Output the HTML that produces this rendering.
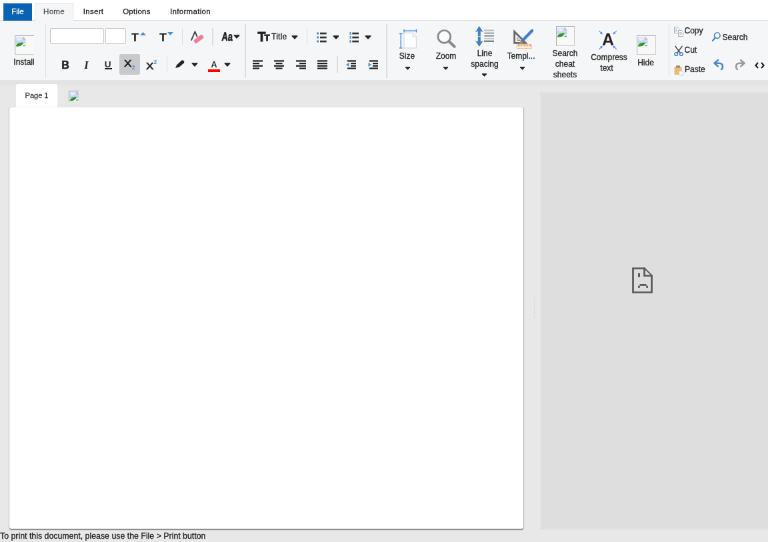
<!DOCTYPE html>
<html><head><meta charset="utf-8"><title>Editor</title>
<style>
html,body{margin:0;padding:0;width:768px;height:542px;overflow:hidden;background:#e8e8e8;}
#stage{position:absolute;left:0;top:0;width:1152px;height:813px;transform:scale(0.666667);transform-origin:0 0;will-change:transform;font-family:"Liberation Sans",sans-serif;font-size:12px;color:#222;overflow:hidden;-webkit-text-stroke:0.28px currentColor;}
#stage *{box-sizing:border-box;}
.abs{position:absolute;}
#tabs{position:absolute;left:0;top:0;width:1152px;height:31px;background:#fff;border-bottom:1px solid #dcdcdc;}
#file{position:absolute;left:5px;top:5px;width:43px;height:26px;background:#0a62b5;color:#fff;font-size:11.5px;line-height:25px;text-align:center;}
.tab{position:absolute;top:5px;height:26px;line-height:25px;font-size:11.5px;text-align:center;color:#222;letter-spacing:0.3px;}
#home{left:52px;width:58px;background:#f5f6f7;border:1px solid #e4e4e4;border-bottom:none;color:#555;height:27px;line-height:23px;}
#ribbon{position:absolute;left:0;top:31px;width:1152px;height:90px;background:#f5f6f7;border-bottom:1.5px solid #e2e2e2;}
.vsep{position:absolute;width:1.5px;background:#dedede;}
.inp{position:absolute;top:42px;height:24px;background:#fff;border:1.5px solid #c6c6c6;border-radius:2px;}
.lbl{position:absolute;text-align:center;font-size:12px;line-height:16px;color:#222;white-space:nowrap;transform:translateX(-50%);}
.arr{position:absolute;width:0;height:0;border-left:4.5px solid transparent;border-right:4.5px solid transparent;border-top:5px solid #222;}
.bimg{position:absolute;border:1.3px solid;border-color:#aeaeae #cbcbcb #cbcbcb #aeaeae;background:#f8f8f8;}
.t{position:absolute;font-weight:bold;color:#222;white-space:nowrap;-webkit-text-stroke:0;}
svg{position:absolute;overflow:visible;}
#doc{position:absolute;left:13.5px;top:161px;width:771.5px;height:632px;background:#fff;border-radius:3px;box-shadow:0 1.8px 1.2px #858585, 1px 0 1px #b0b0b0, -1px 0 1px #c4c4c4;}
#ptab{position:absolute;left:24px;top:126px;width:62px;height:36px;background:#fff;border-radius:3px 3px 0 0;font-size:11px;line-height:34px;text-align:center;color:#333;}
#panel{position:absolute;left:810px;top:138px;width:342px;height:657px;background:#dedede;border:2px solid #e2e2e2;border-right:none;}
#status{position:absolute;left:0px;top:795px;font-size:12.35px;line-height:18px;color:#222;white-space:nowrap;}
</style></head><body>
<div id="stage">
<div id="tabs">
  <div id="file">File</div>
  <div class="tab" id="home">Home</div>
  <div class="tab" style="left:110px;width:60px;">Insert</div>
  <div class="tab" style="left:170px;width:70px;">Options</div>
  <div class="tab" style="left:240px;width:91px;">Information</div>
</div>
<div id="ribbon"></div>
<div class="abs" style="left:0;top:122px;width:1152px;height:9px;background:linear-gradient(#e2e2e2,#e8e8e8);"></div>

<!-- Install -->
<div class="bimg" style="left:22px;top:53px;width:29px;height:29px;border-right:none"></div>
<svg class="bi" style="left:23px;top:54.7px" width="16" height="16" viewBox="0 0 16 16"><use href="#broken"/></svg>
<div class="lbl" style="left:36px;top:85px;">Install</div>

<div class="vsep" style="left:67.5px;top:36px;height:81px;"></div>
<div class="inp" style="left:75px;width:81px;"></div>
<div class="inp" style="left:158px;width:31px;"></div>

<!-- T up / T down -->
<div class="t" style="left:197px;top:46.5px;font-size:16px;line-height:20px;transform:scaleX(1.12);transform-origin:0 0;">T</div>
<svg style="left:209.5px;top:48px" width="9" height="5" viewBox="0 0 9 5"><path d="M0 5 L4.5 0 L9 5Z" fill="#4a8fd6"/></svg>
<div class="t" style="left:238.5px;top:46.5px;font-size:16px;line-height:20px;transform:scaleX(1.12);transform-origin:0 0;">T</div>
<svg style="left:251px;top:48px" width="9" height="5" viewBox="0 0 9 5"><path d="M0 0 L9 0 L4.5 5Z" fill="#4a8fd6"/></svg>
<div class="vsep" style="left:272.5px;top:43px;height:24px;"></div>

<!-- eraser -->
<svg style="left:286px;top:46px" width="20" height="20" viewBox="0 0 20 20">
  <path d="M1.1 13.9 L6.4 1.4 L9.5 8.5" fill="none" stroke="#444" stroke-width="1.9" stroke-linejoin="round" stroke-linecap="round"/>
  <rect x="4.2" y="9.3" width="15.6" height="6.4" rx="1.6" transform="rotate(-37 12 12.5)" fill="#ec7f97"/>
</svg>
<div class="vsep" style="left:318px;top:42px;height:25.5px;"></div>

<!-- Aa -->
<div class="t" style="left:332px;top:43.5px;font-size:18px;line-height:22px;font-weight:bold;transform:scaleX(0.7) skewX(-6deg);transform-origin:0 100%;-webkit-text-stroke:0.7px #222;">Aa</div>
<svg style="left:350.0px;top:51.7px" width="10" height="6" viewBox="0 0 10 6"><path d="M1 0.8 H9 L5 5.2Z" fill="#222" stroke="#222" stroke-width="1.2" stroke-linejoin="round"/></svg>

<div class="vsep" style="left:367px;top:36px;height:81px;"></div>

<!-- Tt Title -->
<div class="t" style="left:386.5px;top:44px;font-size:19.5px;line-height:22px;-webkit-text-stroke:0.9px #222;">T</div>
<div class="t" style="left:396.5px;top:48px;font-size:13.5px;line-height:18px;-webkit-text-stroke:0.8px #222;">T</div>
<div class="abs" style="left:407px;top:47px;font-size:12px;line-height:16px;color:#222;letter-spacing:0.25px;">Title</div>
<svg style="left:436.5px;top:52.7px" width="10" height="6" viewBox="0 0 10 6"><path d="M1 0.8 H9 L5 5.2Z" fill="#222" stroke="#222" stroke-width="1.2" stroke-linejoin="round"/></svg>
<div class="vsep" style="left:459.5px;top:42px;height:25.5px;"></div>

<!-- bullet list -->
<svg style="left:474.5px;top:47.5px" width="15" height="16" viewBox="0 0 15 16">
  <g fill="#4a8fd6"><rect x="0" y="0.5" width="3" height="3"/><rect x="0" y="6.5" width="3" height="3"/><rect x="0" y="12.5" width="3" height="3"/></g>
  <g fill="#333"><rect x="5" y="0.7" width="9.7" height="2.7"/><rect x="5" y="6.7" width="9.7" height="2.7"/><rect x="5" y="12.7" width="9.7" height="2.7"/></g>
</svg>
<svg style="left:498.5px;top:53.2px" width="10" height="6" viewBox="0 0 10 6"><path d="M1 0.8 H9 L5 5.2Z" fill="#222" stroke="#222" stroke-width="1.2" stroke-linejoin="round"/></svg>
<!-- numbered list -->
<svg style="left:523.5px;top:47.5px" width="15" height="16" viewBox="0 0 15 16">
  <g fill="#4a8fd6"><rect x="0.5" y="0" width="2" height="4"/><rect x="0.5" y="6" width="2" height="4"/><rect x="0.5" y="12" width="2" height="4"/></g>
  <g fill="#333"><rect x="4.3" y="0.7" width="9.7" height="2.7"/><rect x="4.3" y="6.7" width="9.7" height="2.7"/><rect x="4.3" y="12.7" width="9.7" height="2.7"/></g>
</svg>
<svg style="left:547.0px;top:53.2px" width="10" height="6" viewBox="0 0 10 6"><path d="M1 0.8 H9 L5 5.2Z" fill="#222" stroke="#222" stroke-width="1.2" stroke-linejoin="round"/></svg>

<!-- Row 2 -->
<div class="t" style="left:82px;width:32px;top:87.2px;text-align:center;font-size:16px;line-height:22px;-webkit-text-stroke:0.5px #222;">B</div>
<div class="t" style="left:113.5px;width:32px;top:87px;text-align:center;font-size:16.5px;line-height:22px;font-family:'Liberation Serif',serif;font-style:italic;">I</div>
<div class="t" style="left:145.5px;width:32px;top:87px;text-align:center;font-size:13.5px;line-height:20px;">U</div>
<div class="abs" style="left:156.5px;top:101.8px;width:11px;height:2.2px;background:#222;"></div>
<div class="abs" style="left:178.5px;top:80.5px;width:31px;height:31.5px;background:#c9c9c9;border-radius:3px;"></div>
<div class="t" style="left:186px;top:85px;font-size:14.5px;line-height:20px;transform:scaleX(1.18);transform-origin:0 0;font-weight:normal;-webkit-text-stroke:0.65px #222;">X</div>
<div class="t" style="left:197.8px;top:95.5px;font-size:8.5px;line-height:10px;color:#4a8fd6;">2</div>
<div class="t" style="left:218.6px;top:88.7px;font-size:14.5px;line-height:20px;transform:scaleX(1.18);transform-origin:0 0;font-weight:normal;-webkit-text-stroke:0.65px #222;">X</div>
<div class="t" style="left:230.5px;top:88.3px;font-size:8.5px;line-height:10px;color:#4a8fd6;">2</div>
<div class="vsep" style="left:249.5px;top:84px;height:24px;"></div>

<!-- pen -->
<svg style="left:263px;top:90px" width="14" height="12" viewBox="0 0 14 12">
  <path d="M0 12 L2.2 7.2 L9.5 0.6 Q11 -0.3 12.6 1.2 Q14 2.8 13 4.2 L5.8 10.6 Z" fill="#222"/>
</svg>
<svg style="left:286.5px;top:94.2px" width="10" height="6" viewBox="0 0 10 6"><path d="M1 0.8 H9 L5 5.2Z" fill="#222" stroke="#222" stroke-width="1.2" stroke-linejoin="round"/></svg>
<!-- font color -->
<div class="t" style="left:316.5px;top:88.5px;font-size:12.5px;line-height:16px;">A</div>
<div class="abs" style="left:312px;top:103.5px;width:18px;height:4.5px;background:#f00;"></div>
<svg style="left:336.0px;top:94.2px" width="10" height="6" viewBox="0 0 10 6"><path d="M1 0.8 H9 L5 5.2Z" fill="#222" stroke="#222" stroke-width="1.2" stroke-linejoin="round"/></svg>

<!-- align icons -->
<svg style="left:378.5px;top:90px" width="15" height="14" viewBox="0 0 15 14"><g fill="#222"><rect x="0" y="0.3" width="15" height="2.2"/><rect x="0" y="4" width="10" height="2.2"/><rect x="0" y="7.7" width="15" height="2.2"/><rect x="0" y="11.4" width="10" height="2.2"/></g></svg>
<svg style="left:410.5px;top:90px" width="15" height="14" viewBox="0 0 15 14"><g fill="#222"><rect x="0" y="0.3" width="15" height="2.2"/><rect x="2.5" y="4" width="10" height="2.2"/><rect x="0" y="7.7" width="15" height="2.2"/><rect x="2.5" y="11.4" width="10" height="2.2"/></g></svg>
<svg style="left:443.5px;top:90px" width="15" height="14" viewBox="0 0 15 14"><g fill="#222"><rect x="0" y="0.3" width="15" height="2.2"/><rect x="5" y="4" width="10" height="2.2"/><rect x="0" y="7.7" width="15" height="2.2"/><rect x="5" y="11.4" width="10" height="2.2"/></g></svg>
<svg style="left:475.5px;top:90px" width="15" height="14" viewBox="0 0 15 14"><g fill="#222"><rect x="0" y="0.3" width="15" height="2.2"/><rect x="0" y="4" width="15" height="2.2"/><rect x="0" y="7.7" width="15" height="2.2"/><rect x="0" y="11.4" width="15" height="2.2"/></g></svg>
<div class="vsep" style="left:505px;top:84px;height:24.5px;"></div>
<!-- outdent -->
<svg style="left:518.5px;top:90px" width="15" height="14" viewBox="0 0 15 14"><g fill="#222"><rect x="2" y="0.3" width="13" height="2.2"/><rect x="7" y="4" width="8" height="2.2"/><rect x="7" y="7.7" width="8" height="2.2"/><rect x="2" y="11.4" width="13" height="2.2"/></g><path d="M4.5 3.8 L4.5 10 L0 6.9Z" fill="#4a8fd6"/></svg>
<!-- indent -->
<svg style="left:552px;top:90px" width="15" height="14" viewBox="0 0 15 14"><g fill="#222"><rect x="2" y="0.3" width="13" height="2.2"/><rect x="7" y="4" width="8" height="2.2"/><rect x="7" y="7.7" width="8" height="2.2"/><rect x="2" y="11.4" width="13" height="2.2"/></g><path d="M0.5 3.8 L0.5 10 L5 6.9Z" fill="#4a8fd6"/></svg>

<div class="vsep" style="left:579px;top:36px;height:81px;"></div>

<!-- Size -->
<svg style="left:599px;top:44px" width="27" height="29" viewBox="0 0 27 29">
  <path d="M7 5.5 L20 5.5 L25.5 11 L25.5 28 L7 28Z" fill="#fff" stroke="#dedede" stroke-width="1.4"/>
  <path d="M20 5.5 L20 11 L25.5 11" fill="#f4f4f4" stroke="#dedede" stroke-width="1.1"/>
  <g stroke="#4a90ee" stroke-width="1.4" fill="none"><path d="M7 2.3 H25.5 M7 0 V4.6 M25.5 0 V4.6"/><path d="M2.2 6.5 V28 M0 6.5 H4.5 M0 28 H4.5"/></g>
</svg>
<div class="lbl" style="left:610.5px;top:76px;">Size</div>
<svg style="left:606.7px;top:99.5px" width="9" height="5" viewBox="0 0 9 5"><path d="M1 0.8 H8 L4.5 4.2Z" fill="#222" stroke="#222" stroke-width="1" stroke-linejoin="round"/></svg>

<!-- Zoom -->
<svg style="left:655px;top:44px" width="30" height="29" viewBox="0 0 30 29">
  <circle cx="11.3" cy="10.9" r="9.4" fill="#fbfbfb" stroke="#8a8a8a" stroke-width="2.7"/>
  <path d="M18.4 18 L26.6 25.8" stroke="#8a8a8a" stroke-width="4.2" stroke-linecap="round"/>
</svg>
<div class="lbl" style="left:669px;top:76px;">Zoom</div>
<svg style="left:664.1px;top:99.5px" width="9" height="5" viewBox="0 0 9 5"><path d="M1 0.8 H8 L4.5 4.2Z" fill="#222" stroke="#222" stroke-width="1" stroke-linejoin="round"/></svg>

<!-- Line spacing -->
<svg style="left:713px;top:39.5px" width="28" height="29" viewBox="0 0 28 29">
  <path d="M5.8 -1 L11.8 8.3 Q9 6.8 7.8 6.8 V22.2 Q9 22.2 11.8 20.7 L5.8 30 L-0.2 20.7 Q2.6 22.2 3.8 22.2 V6.8 Q2.6 6.8 -0.2 8.3Z" fill="#3f80c2"/>
  <rect x="3" y="13.9" width="6" height="1.1" fill="#f5f6f7" opacity="0.7"/>
  <rect x="13.3" y="4.6" width="14.7" height="1.8" fill="#b5b5b5"/>
  <rect x="13.3" y="8.7" width="14.7" height="1.8" fill="#8f8f8f"/>
  <rect x="13.3" y="12.9" width="14.7" height="1.8" fill="#888"/>
  <rect x="13.3" y="17" width="14.7" height="1.8" fill="#c2c2c2"/>
  <rect x="13" y="20.7" width="15" height="2.1" fill="#6c6c6c"/>
</svg>
<div class="lbl" style="left:727px;top:71.5px;">Line<br>spacing</div>
<svg style="left:721.5px;top:109.6px" width="9" height="5" viewBox="0 0 9 5"><path d="M1 0.8 H8 L4.5 4.2Z" fill="#222" stroke="#222" stroke-width="1" stroke-linejoin="round"/></svg>

<!-- Templ -->
<svg style="left:770px;top:44px" width="30" height="29" viewBox="0 0 30 29">
  <path d="M1.6 3.5 L1.6 20.3 L18.4 20.3 Z" fill="none" stroke="#6a6a6a" stroke-width="2.8" stroke-linejoin="miter"/>
  <path d="M6 12.5 L6 16.5 L10 16.5Z" fill="#f5f6f7" stroke="#6a6a6a" stroke-width="0.8"/>
  <path d="M13.2 17.2 L28 2" stroke="#3f80c2" stroke-width="4.4" stroke-linecap="round"/>
  <path d="M9.5 21.5 L10.6 16.6 L14.4 20.2Z" fill="#d48a4a"/>
  <rect x="5.3" y="22.8" width="22" height="5.8" fill="#fdf1e6" stroke="#f3b585" stroke-width="0.9"/>
  <path d="M7.5 22.8 v2.8 M9.8 22.8 v2.8 M12.1 22.8 v2.8 M14.4 22.8 v2.8 M16.7 22.8 v2.8 M19 22.8 v2.8 M21.3 22.8 v2.8 M23.6 22.8 v2.8 M25.6 22.8 v2.8" stroke="#ec8f4c" stroke-width="1.1"/>
</svg>
<div class="lbl" style="left:781.5px;top:76px;">Templ...</div>
<svg style="left:779.4px;top:99.5px" width="9" height="5" viewBox="0 0 9 5"><path d="M1 0.8 H8 L4.5 4.2Z" fill="#222" stroke="#222" stroke-width="1" stroke-linejoin="round"/></svg>

<!-- Search cheat sheets -->
<div class="bimg" style="left:833.5px;top:39px;width:28.5px;height:30px;"></div>
<svg style="left:834.5px;top:40.7px" width="16" height="16" viewBox="0 0 16 16"><use href="#broken"/></svg>
<div class="lbl" style="left:847.5px;top:71.8px;">Search<br>cheat<br>sheets</div>

<!-- Compress text -->
<svg style="left:898px;top:46px" width="28" height="28" viewBox="0 0 28 28">
  <g stroke="#4a90ee" stroke-width="1.1" fill="none" stroke-linecap="round">
    <path d="M0.6 0.3 L4 3.6"/><path d="M26.7 0.3 L23.3 3.6"/><path d="M0.6 27.9 L4 24.6"/><path d="M26.7 27.9 L23.3 24.6"/>
  </g>
  <g fill="#4a90ee">
    <path d="M5.8 5.4 L1.9 4.4 L4.8 1.5Z"/><path d="M21.5 5.4 L25.4 4.4 L22.5 1.5Z"/>
    <path d="M5.8 22.8 L1.9 23.8 L4.8 26.7Z"/><path d="M21.5 22.8 L25.4 23.8 L22.5 26.7Z"/>
  </g>
</svg>
<div class="t" style="left:902px;top:43.6px;font-size:25px;line-height:30px;width:20px;text-align:center;">A</div>
<div class="lbl" style="left:913.5px;top:77.5px;">Compress</div><div class="lbl" style="left:910px;top:93.5px;">text</div>

<!-- Hide -->
<div class="bimg" style="left:955px;top:53px;width:28.5px;height:28.5px;"></div>
<svg style="left:956px;top:54.7px" width="16" height="16" viewBox="0 0 16 16"><use href="#broken"/></svg>
<div class="lbl" style="left:968.5px;top:85.5px;">Hide</div>

<div class="vsep" style="left:1002.5px;top:36px;height:80px;"></div>

<!-- Copy/Cut/Paste -->
<svg style="left:1011px;top:39.5px" width="14" height="15" viewBox="0 0 14 15">
  <path d="M0.5 0.5 H5.5 L7.5 2.5 V9.5 H0.5Z" fill="#fff" stroke="#aaa" stroke-width="1"/>
  <path d="M6.5 5.5 H11.5 L13.5 7.5 V14.5 H6.5Z" fill="#fff" stroke="#aaa" stroke-width="1"/>
  <path d="M2 3 H5 M2 5 H5 M2 7 H5" stroke="#7aa7d8" stroke-width="0.9"/>
  <path d="M8 9 H12 M8 11 H12" stroke="#7aa7d8" stroke-width="0.9"/>
</svg>
<div class="abs" style="left:1026.5px;top:37.5px;font-size:12px;line-height:16px;">Copy</div>
<svg style="left:1011px;top:68.5px" width="14" height="15" viewBox="0 0 14 15">
  <path d="M2 0.5 L9.5 10.5 M12 0.5 L4.5 10.5" stroke="#555" stroke-width="1.7" stroke-linecap="round" fill="none"/>
  <circle cx="3.2" cy="12" r="2.4" fill="none" stroke="#3f7fd0" stroke-width="1.4"/>
  <circle cx="10.8" cy="12" r="2.4" fill="none" stroke="#3f7fd0" stroke-width="1.4"/>
</svg>
<div class="abs" style="left:1026.5px;top:67px;font-size:12px;line-height:16px;">Cut</div>
<svg style="left:1011px;top:97.5px" width="14" height="15" viewBox="0 0 14 15">
  <rect x="0.5" y="2" width="11" height="12" rx="1" fill="#e9bd72"/>
  <rect x="3" y="0.3" width="6" height="3.2" rx="0.8" fill="#8a8a8a"/>
  <path d="M7.5 8.5 H11.5 L13.5 10.5 V14.6 H7.5Z" fill="#fff" stroke="#b5b5b5" stroke-width="0.8"/>
</svg>
<div class="abs" style="left:1027px;top:96px;font-size:12px;line-height:16px;">Paste</div>

<!-- Search -->
<svg style="left:1068px;top:48px" width="13" height="14" viewBox="0 0 13 14">
  <circle cx="7.8" cy="5.2" r="4.2" fill="#fff" stroke="#3f86c9" stroke-width="1.7"/>
  <path d="M4.6 8.6 L0.9 13" stroke="#3f86c9" stroke-width="2.2" stroke-linecap="round"/>
</svg>
<div class="abs" style="left:1083.5px;top:47.5px;font-size:12px;line-height:16px;">Search</div>

<!-- undo / redo / code -->
<svg style="left:1069.5px;top:89px" width="16" height="16" viewBox="0 0 16 16">
  <path d="M6.8 1.2 L1.6 5.8 L6.8 10.4" fill="none" stroke="#4b86c6" stroke-width="2.6" stroke-linejoin="round" stroke-linecap="round"/>
  <path d="M2.5 5.8 H8.5 Q14 5.8 14 11 Q14 13.6 12 15" fill="none" stroke="#4b86c6" stroke-width="2.6" stroke-linecap="round"/>
</svg>
<svg style="left:1102px;top:88.5px" width="16" height="16" viewBox="0 0 16 16">
  <path d="M9.2 1.2 L14.4 5.8 L9.2 10.4" fill="none" stroke="#999" stroke-width="2.6" stroke-linejoin="round" stroke-linecap="round"/>
  <path d="M13.5 5.8 H7.5 Q2 5.8 2 11 Q2 13.6 4 15" fill="none" stroke="#999" stroke-width="2.6" stroke-linecap="round"/>
</svg>
<svg style="left:1131.5px;top:92.5px" width="15" height="10" viewBox="0 0 15 10">
  <path d="M5 0.8 L1.4 5 L5 9.2 M10 0.8 L13.6 5 L10 9.2" fill="none" stroke="#111" stroke-width="2"/>
</svg>

<!-- doc tabs -->
<div id="ptab">Page 1</div>
<div class="abs" style="left:102.5px;top:135.5px;width:16px;height:17px;border-left:1.5px solid #9c9c9c;border-top:1.5px solid #9c9c9c;"></div><svg style="left:104px;top:137px" width="14.5" height="15.5" viewBox="0 0 16 16" preserveAspectRatio="none"><use href="#broken"/></svg>
<div id="doc"></div>
<div id="panel"></div>

<!-- sad page -->
<svg style="left:947.5px;top:401px" width="31" height="39" viewBox="0 0 31 39">
  <path d="M19 1.5 H1.5 V37.5 H29.5 V12" fill="none" stroke="#595959" stroke-width="2.7"/>
  <path d="M18.5 0.2 V12.5 H30.8" fill="none" stroke="#595959" stroke-width="2.7"/>
  <path d="M19 1.5 L29.5 12" fill="none" stroke="#595959" stroke-width="1.8"/>
  <rect x="9" y="8.8" width="3" height="5.6" fill="#595959"/>
  <rect x="11.5" y="25" width="10" height="2.8" fill="#595959"/>
  <rect x="9" y="27.6" width="2.8" height="3.2" fill="#595959"/>
  <rect x="21.2" y="27.6" width="2.8" height="3.2" fill="#595959"/>
</svg>

<div class="abs" style="left:801px;top:445px;width:3px;height:32px;border-left:1.5px dotted #d6d6d6;"></div>

<div id="status">To print this document, please use the File &gt; Print button</div>

<svg width="0" height="0" style="position:absolute"><defs>
<g id="broken">
  <path d="M0.3 0.3 H11 L15.5 4.8 V15 H0.3Z" fill="#fdfdfe"/>
  <path d="M0.3 0.3 H11 L11.5 4.5 L15.5 5 V10.5 H0.3Z" fill="url(#sky)"/>
  <path d="M10.8 0.3 Q13 0.8 14.2 2.2 Q15.3 3.4 15.6 5.4 Q13.5 4.2 11.2 4.8 Q11.8 2.5 10.8 0.3Z" fill="#b9b9b9"/>
  <ellipse cx="5.6" cy="4.3" rx="2.6" ry="1.3" fill="#f4f7ff"/>
  <path d="M0.5 14.4 Q1.8 8.8 12 8.6 Q10.5 14 4.5 14.6Z" fill="#2f9a22"/>
  <path d="M11.5 12.5 H15.2 V14.2 H11Z" fill="#3a9a35" opacity="0.75"/>
</g>
<linearGradient id="sky" x1="0" y1="0" x2="0" y2="1"><stop offset="0" stop-color="#e3eaff"/><stop offset="1" stop-color="#bccdf4"/></linearGradient>
</g></defs></svg>
</div>
</body></html>
